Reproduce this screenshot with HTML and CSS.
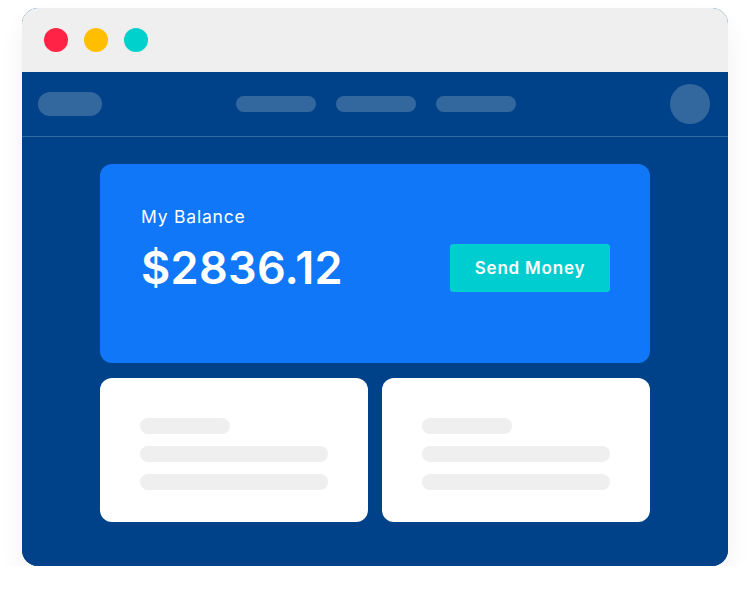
FILE: index.html
```html
<!DOCTYPE html>
<html>
<head>
<meta charset="utf-8">
<link rel="stylesheet" href="styles.css">
</head>
<body>
<div class="window">
  <div class="titlebar">
    <span class="dot red"></span>
    <span class="dot yellow"></span>
    <span class="dot teal"></span>
  </div>
  <div class="app">
    <div class="nav">
      <span class="logo"></span>
      <div class="links">
        <span class="link"></span>
        <span class="link"></span>
        <span class="link"></span>
      </div>
      <span class="avatar"></span>
    </div>
    <div class="content">
      <div class="balance">
        <div class="label">My Balance</div>
        <div class="row">
          <div class="amount">$2836.12</div>
          <button class="send">Send Money</button>
        </div>
      </div>
      <div class="cards">
        <div class="card">
          <span class="line short"></span>
          <span class="line"></span>
          <span class="line"></span>
        </div>
        <div class="card">
          <span class="line short"></span>
          <span class="line"></span>
          <span class="line"></span>
        </div>
      </div>
    </div>
  </div>
</div>
</body>
</html>
```
FILE: styles.css
```css
* { box-sizing: border-box; }
html, body { margin: 0; background: #fff; }
body { font-family: Inter, "Noto Sans", sans-serif; padding-top: 8px; }
.window {
  margin-left: 22px;
  width: 706px;
  height: 558px;
  border-radius: 16px;
  overflow: hidden;
  background: #00428a;
  box-shadow: 0 14px 26px rgba(0,0,0,0.06);
  display: flex;
  flex-direction: column;
}
.titlebar {
  height: 64px;
  background: #efefef;
  display: flex;
  align-items: center;
  gap: 16px;
  padding-left: 22px;
}
.dot { width: 24px; height: 24px; border-radius: 50%; display: block; }
.red { background: #ff2345; }
.yellow { background: #ffbf00; }
.teal { background: #00d1cc; }
.app { flex: 1; background: #00428a; }
.nav {
  height: 65px;
  border-bottom: 1px solid #33689f;
  display: flex;
  align-items: center;
  justify-content: space-between;
  padding: 0 18px 0 16px;
}
.logo { width: 64px; height: 24px; border-radius: 12px; background: #33689f; display: block; }
.links { display: flex; gap: 20px; margin-right: 20px; }
.link { width: 80px; height: 16px; border-radius: 8px; background: #33689f; display: block; }
.avatar { width: 40px; height: 40px; border-radius: 50%; background: #33689f; display: block; }
.content {
  width: 550px;
  margin: 27px auto 0;
  display: flex;
  flex-direction: column;
  gap: 15px;
}
.balance {
  height: 199px;
  background: #1077f9;
  border-radius: 12px;
  padding: 42px 40px 0 41px;
  color: #fff;
}
.label { font-size: 17.5px; font-weight: 400; line-height: 22px; letter-spacing: 0.8px; }
.row {
  display: flex;
  justify-content: space-between;
  align-items: center;
  margin-top: 12px;
}
.amount { font-size: 45px; font-weight: 600; line-height: 56px; letter-spacing: 0.3px; }
.send {
  width: 160px;
  height: 48px;
  border: 0;
  border-radius: 3px;
  background: #00cdd0;
  color: #fff;
  font-family: inherit;
  font-size: 17px;
  font-weight: 600;
  letter-spacing: 0.8px;
}
.cards { display: flex; gap: 14px; }
.card {
  flex: 1;
  height: 144px;
  background: #fff;
  border-radius: 12px;
  padding: 40px 40px 0;
  display: flex;
  flex-direction: column;
  gap: 12px;
}
.line { display: block; height: 16px; width: 188px; border-radius: 8px; background: #efefef; }
.line.short { width: 90px; }
```
